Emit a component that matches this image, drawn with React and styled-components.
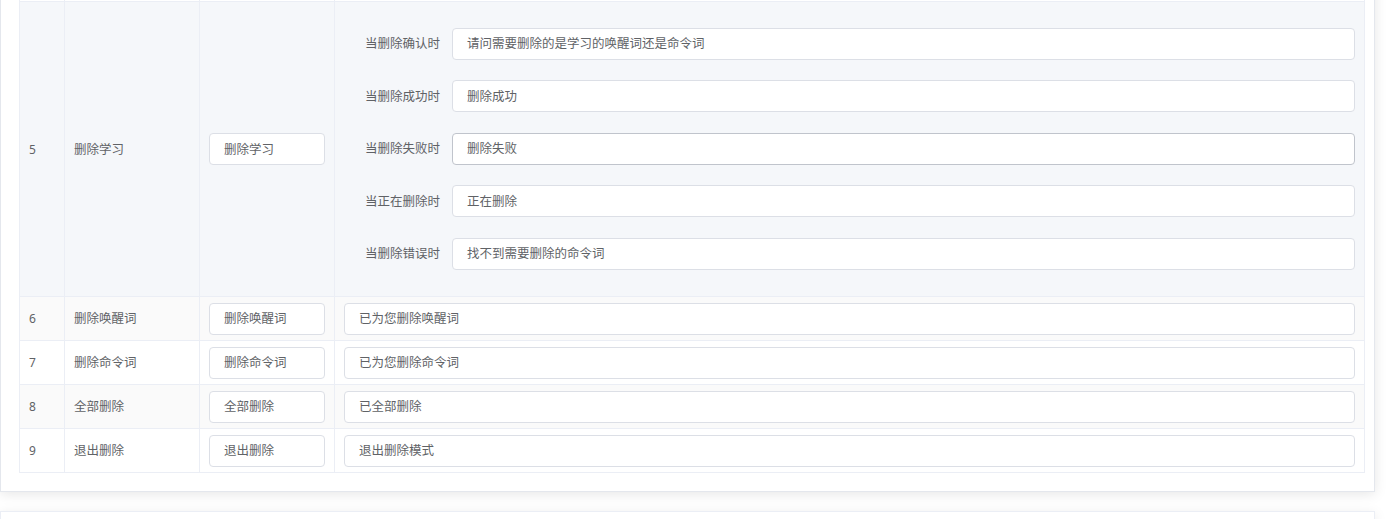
import React from "react";
import styled, { createGlobalStyle } from "styled-components";

const Global = createGlobalStyle`
  html, body { margin: 0; padding: 0; background: #fff; }
  body {
    font-family: "Noto Sans", "Noto Sans CJK SC", sans-serif;
    font-size: 12.5px;
    color: #606266;
    overflow: hidden;
  }
  * { box-sizing: border-box; }
`;

const Page = styled.div`
  width: 1375px;
  margin-top: -42px;
`;

const Card = styled.div`
  background: #fff;
  border: 1px solid #e4e7ed;
  border-top: none;
  box-shadow: 0 2px 12px 0 rgba(0, 0, 0, 0.1);
  padding: 0 9px 18px 18px;
`;

const NextCard = styled.div`
  margin-top: 19px;
  height: 60px;
  background: #fff;
  border: 1px solid #ebeef5;
  box-shadow: 0 2px 12px 0 rgba(0, 0, 0, 0.08);
`;

const Table = styled.div`
  border-left: 1px solid #ebeef5;
  border-right: 1px solid #ebeef5;
`;

const Row = styled.div`
  display: grid;
  grid-template-columns: 45px 135px 135px 1fr;
  min-height: 44px;
  border-bottom: 1px solid #ebeef5;
  background: ${(p) => p.$bg || "#fff"};
`;

const Cell = styled.div`
  display: flex;
  align-items: center;
  padding: 0 9px;
  border-right: 1px solid #ebeef5;
  line-height: 23px;
  &:last-child { border-right: none; }
`;

const NumCell = styled(Cell)`
  font-size: 12px;
`;

const Input = styled.div`
  flex: 1;
  height: 32px;
  display: flex;
  align-items: center;
  padding: 0 14px;
  background: #fff;
  border: 1px solid ${(p) => (p.$hover ? "#c0c4cc" : "#dcdfe6")};
  border-radius: 4px;
  color: #606266;
  white-space: nowrap;
  overflow: hidden;
`;

const ShortInput = styled(Input)`
  flex: 0 0 116px;
  padding: 0 14px;
`;

const Form = styled.div`
  flex: 1;
  display: flex;
  flex-direction: column;
  gap: 20.5px;
  padding: 25.5px 0 26.5px;
`;

const FormItem = styled.div`
  display: flex;
  align-items: center;
`;

const Label = styled.div`
  flex: 0 0 108px;
  padding-right: 12px;
  text-align: right;
  white-space: nowrap;
`;

const responses = [
  { label: "当删除确认时", value: "请问需要删除的是学习的唤醒词还是命令词" },
  { label: "当删除成功时", value: "删除成功" },
  { label: "当删除失败时", value: "删除失败", hover: true },
  { label: "当正在删除时", value: "正在删除" },
  { label: "当删除错误时", value: "找不到需要删除的命令词" },
];

const rows = [
  { n: 6, name: "删除唤醒词", word: "删除唤醒词", reply: "已为您删除唤醒词", bg: "#fafafa" },
  { n: 7, name: "删除命令词", word: "删除命令词", reply: "已为您删除命令词" },
  { n: 8, name: "全部删除", word: "全部删除", reply: "已全部删除", bg: "#fafafa" },
  { n: 9, name: "退出删除", word: "退出删除", reply: "退出删除模式" },
];

export default function App() {
  return (
    <>
      <Global />
      <Page>
        <Card>
          <Table>
            <Row>
              <Cell />
              <Cell />
              <Cell />
              <Cell />
            </Row>
            <Row $bg="#f5f7fa">
              <NumCell>5</NumCell>
              <Cell>删除学习</Cell>
              <Cell>
                <ShortInput>删除学习</ShortInput>
              </Cell>
              <Cell>
                <Form>
                  {responses.map((r) => (
                    <FormItem key={r.label}>
                      <Label>{r.label}</Label>
                      <Input $hover={r.hover}>{r.value}</Input>
                    </FormItem>
                  ))}
                </Form>
              </Cell>
            </Row>
            {rows.map((r) => (
              <Row key={r.n} $bg={r.bg}>
                <NumCell>{r.n}</NumCell>
                <Cell>{r.name}</Cell>
                <Cell>
                  <ShortInput>{r.word}</ShortInput>
                </Cell>
                <Cell>
                  <Input>{r.reply}</Input>
                </Cell>
              </Row>
            ))}
          </Table>
        </Card>
        <NextCard />
      </Page>
    </>
  );
}
